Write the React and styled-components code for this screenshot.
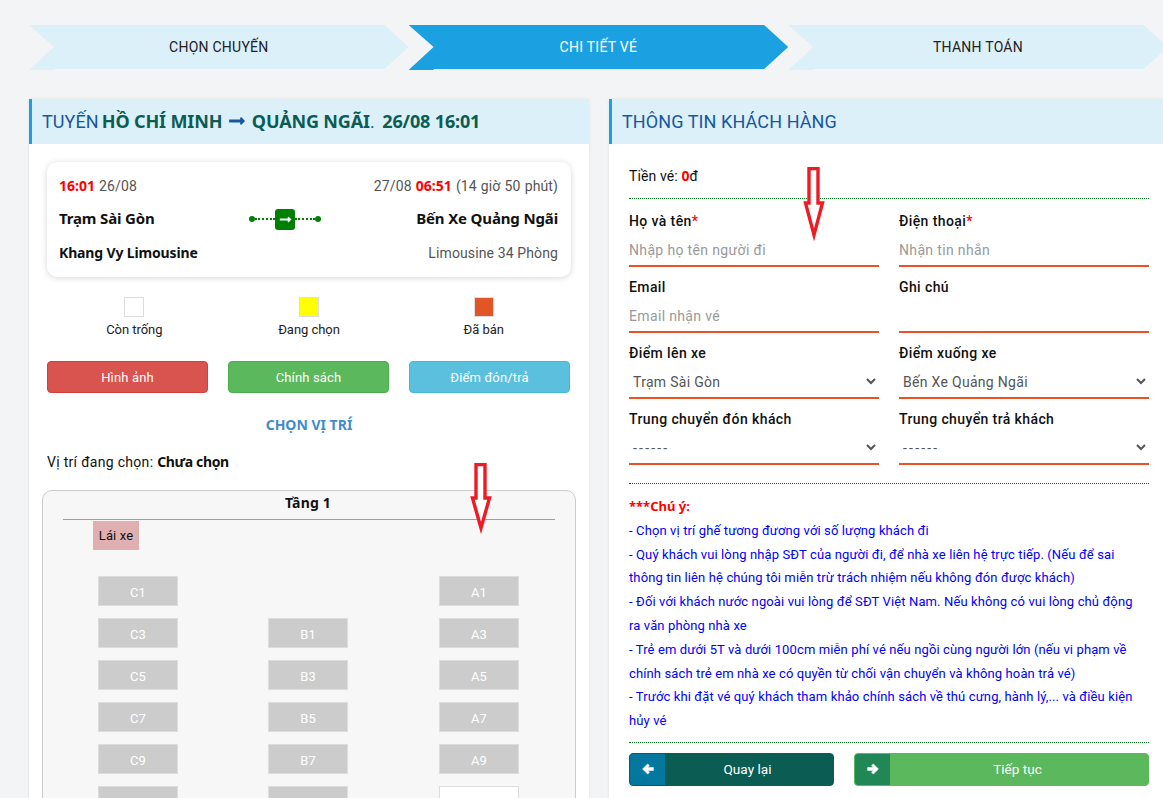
import React from 'react'
import styled, { createGlobalStyle } from 'styled-components'
import { FaLongArrowAltRight } from 'react-icons/fa'

const boldFont = '"Noto Sans", Roboto, sans-serif'

const GlobalStyle = createGlobalStyle`
  html, body {
    margin: 0;
    height: 100%;
    overflow: hidden;
    background: #f3f4f6;
  }
  * { box-sizing: border-box; }
  body {
    font-family: Roboto, "Noto Sans", sans-serif;
    font-size: 14px;
    letter-spacing: 0.12px;
    color: #111;
  }
  b {
    font-family: ${boldFont};
    font-weight: 700;
    letter-spacing: 0;
  }
`

const Page = styled.div`
  position: relative;
  width: 1163px;
  height: 798px;
  overflow: hidden;
  padding: 25px 0 0 29px;
`

const Steps = styled.div`
  display: flex;
  width: 1140px;
  height: 45px;
`

const Step = styled.div`
  flex: 0 0 379.6px;
  height: 45px;
  padding-bottom: 1px;
  display: flex;
  align-items: center;
  justify-content: center;
  font-size: 14px;
  letter-spacing: 0.25px;
  background: ${p => p.$active ? '#1ba1e2' : '#dcf0fa'};
  color: ${p => p.$active ? '#fff' : '#222'};
  clip-path: polygon(0 0, calc(100% - 24px) 0, 100% 22px, calc(100% - 24px) 44px, 25px 44px, 25px 45px, 0 45px, 25px 22px);
`

const Columns = styled.div`
  display: flex;
  align-items: flex-start;
  gap: 20px;
  margin-top: 29px;
  width: 1140px;
`

const Panel = styled.section`
  flex: 0 0 560px;
  height: 720px;
  background: #fff;
  box-shadow: 0 0 3px rgba(0,0,0, 0.08);
`

const PanelHeader = styled.h2`
  margin: 0;
  height: 45px;
  padding: 0 0 1px 10px;
  display: flex;
  align-items: center;
  gap: 4px;
  background: #dcf0fa;
  border-left: 3px solid #1ba1e2;
  color: #17589c;
  font-size: 18px;
  font-weight: 400;
  letter-spacing: 0.1px;
  white-space: pre;
`

const Strong = styled.b`
  color: #0b5c53;
  letter-spacing: -0.15px;
  word-spacing: 0;
`

const FirstStop = styled(Strong)`
  margin-left: -1.5px;
`

const TitleTail = styled.span`
  margin-left: 2px;
  word-spacing: 3px;
`

const RouteArrow = styled(FaLongArrowAltRight)`
  color: #17589c;
  font-size: 18px;
  margin-left: 1.5px;
`

const TicketCard = styled.div`
  margin: 18px 18px 0;
  height: 115px;
  padding: 14px 13px 0 12px;
  border-radius: 10px;
  background: #fff;
  box-shadow: 0 1px 6px rgba(0,0,0, 0.16);
`

const TicketRow = styled.div`
  display: flex;
  justify-content: space-between;
  align-items: center;
  height: 18px;
  margin-bottom: ${p => p.$gap || 0}px;
  font-size: 14px;
  word-spacing: ${p => p.$loose ? 0.5 : 0}px;
`

const Time = styled.b`
  color: #f00;
`

const Place = styled.b`
  font-size: 15px;
  letter-spacing: -0.15px;
  margin-top: -2px;
`

const Operator = styled.b`
  letter-spacing: -0.15px;
  margin-top: -2px;
`

const Muted = styled.span`
  color: #555;
`

const Route = styled.div`
  display: flex;
  align-items: center;
  width: 72px;
`

const RouteDot = styled.i`
  width: 6px;
  height: 6px;
  border-radius: 50%;
  background: #008000;
`

const RouteLine = styled.i`
  flex: 1;
  border-top: 2px dotted #008000;
`

const RouteBadge = styled.div`
  width: 20px;
  height: 21px;
  border-radius: 3px;
  background: #008000;
  color: #fff;
  display: flex;
  align-items: center;
  justify-content: center;
  font-size: 13px;
`

const Legend = styled.div`
  display: grid;
  grid-template-columns: repeat(3, 1fr);
  margin: 20px 18px 0;
`

const LegendItem = styled.div`
  display: flex;
  flex-direction: column;
  align-items: center;
  gap: 5px;
  font-size: 13px;
  letter-spacing: -0.05px;
  color: #222;
`

const Swatch = styled.span`
  width: 20px;
  height: 20px;
  border: 1px solid #ddd;
  background: ${p => p.$color};
`

const Actions = styled.div`
  display: grid;
  grid-template-columns: repeat(3, 161px);
  column-gap: 20px;
  margin: 24px 18px 0;
`

const ActionButton = styled.button`
  height: 32px;
  padding-top: 1px;
  border: 1px solid ${p => p.$border};
  border-radius: 4px;
  background: ${p => p.$bg};
  color: #fff;
  font: inherit;
  font-size: 13px;
  letter-spacing: 0.15px;
`

const PickTitle = styled.b`
  display: block;
  margin-top: 23px;
  text-align: center;
  color: #428bca;
  line-height: 18px;
`

const PickState = styled.div`
  margin: 19px 0 0 18px;
  line-height: 18px;
  letter-spacing: 0.3px;
`

const PickValue = styled.b`
  letter-spacing: -0.35px;
`

const SeatBox = styled.div`
  margin: 19px 13px 0 13px;
  height: 400px;
  padding-top: 3px;
  border: 1px solid #ccc;
  border-radius: 10px;
  background: #f7f7f7;
`

const Floor = styled.b`
  display: block;
  margin: 0 20px;
  padding-right: 2px;
  height: 26px;
  border-bottom: 1px solid #a89b9b;
  text-align: center;
  line-height: 18px;
  letter-spacing: 0.2px;
`

const Driver = styled.div`
  width: 46px;
  height: 29px;
  margin: 1px 0 0 50px;
  background: #e0b0b0;
  font-size: 13px;
  line-height: 30px;
  text-align: center;
`

const SeatGrid = styled.div`
  display: grid;
  grid-template-columns: 170px 171px 80px;
  row-gap: 12px;
  margin: 26px 0 0 55px;
`

const Seat = styled.div`
  width: 80px;
  height: 30px;
  border: 1px solid #ddd;
  background: ${p => p.$free ? '#fff' : '#ccc'};
  color: #fff;
  font-size: 13px;
  line-height: 31px;
  text-align: center;
`

const Form = styled.div`
  padding: 0 20px;
`

const Fare = styled.div`
  height: 55px;
  padding-top: 23px;
  line-height: 18px;
  border-bottom: 1px dotted #0a7a1e;
`

const Money = styled.b`
  color: #f00;
`

const FieldGrid = styled.div`
  display: grid;
  grid-template-columns: 250px 250px;
  column-gap: 20px;
  padding-top: 13px;
`

const Field = styled.label`
  display: block;
  height: 66px;
`

const FieldLabel = styled.span`
  display: block;
  font-weight: 500;
  line-height: 18px;
  height: 20px;
  letter-spacing: 0.4px;
`

const Req = styled.span`
  color: #f00;
`

const TextInput = styled.input`
  display: block;
  width: 100%;
  height: 35px;
  padding: 3px 0 0;
  border: 0;
  border-bottom: 2px solid #eb5223;
  outline: none;
  background: transparent;
  font: inherit;
  letter-spacing: 0.35px;
  &::placeholder { color: #999; }
`

const SelectInput = styled.select`
  display: block;
  width: 100%;
  height: 35px;
  padding-top: 2px;
  border: 0;
  border-bottom: 2px solid #eb5223;
  outline: none;
  background: transparent;
  color: #555;
  font: inherit;
  letter-spacing: ${p => p.$dash ? '2.2px' : '0.3px'};
`

const Note = styled.div`
  margin-top: 7px;
  padding: 11px 5px 0 0;
  border-top: 1px dotted #0b5c53;
  font-size: 13px;
  line-height: 23.8px;
  color: #00f;
`

const NoteTitle = styled.b`
  color: #f00;
`

const FooterRow = styled.div`
  display: grid;
  grid-template-columns: 205px 295px;
  column-gap: 20px;
  margin-top: 9px;
  padding-top: 10px;
  border-top: 1px dotted #0a7a1e;
`

const NavButton = styled.button`
  display: flex;
  align-items: stretch;
  height: 33px;
  padding: 0;
  overflow: hidden;
  border: 1px solid ${p => p.$bg};
  border-radius: 4px;
  background: ${p => p.$bg};
  color: #fff;
  font: inherit;
  font-size: 13.6px;
`

const NavIcon = styled.span`
  flex: 0 0 35px;
  display: flex;
  align-items: center;
  justify-content: center;
  background: ${p => p.$bg};
`

const NavLabel = styled.span`
  flex: 1;
  align-self: center;
  padding-right: 3px;
`

const ArrowGlyph = styled.svg`
  transform: ${p => p.$flip ? 'scaleX(-1)' : 'none'};
`

const Annotation = styled.svg`
  position: absolute;
  left: ${p => p.$x}px;
  top: ${p => p.$y}px;
`

// the thick left arrow of the nav buttons, mirrored for "next"
const NavArrow = ({ flip }) => (
  <ArrowGlyph $flip={flip} width="12" height="12" viewBox="0 0 12 12">
    <path
      d="M0.6 6 L5.7 0.9 L7.5 2.7 L5.6 4.6 H11.4 V7.4 H5.6 L7.5 9.3 L5.7 11.1 Z"
      fill="#fff"
      stroke="#fff"
      strokeWidth="0.6"
      strokeLinejoin="round"
    />
  </ArrowGlyph>
)

const RedArrow = ({ x, y, h, head }) => (
  <Annotation $x={x} $y={y} width="22" height={h} viewBox={`0 0 22 ${h}`}>
    <path
      d={`M6 1.5 H15 V${head} H19.5 L11 ${h - 8} L2.5 ${head} H6 Z`}
      fill="#fff"
      stroke="#ed1c24"
      strokeWidth="3.4"
      strokeMiterlimit="10"
    />
  </Annotation>
)

const seatRows = [
  ['C1', null, 'A1'],
  ['C3', 'B1', 'A3'],
  ['C5', 'B3', 'A5'],
  ['C7', 'B5', 'A7'],
  ['C9', 'B7', 'A9'],
  ['', '', ''],
]

const notes = [
  '- Chọn vị trí ghế tương đương với số lượng khách đi',
  '- Quý khách vui lòng nhập SĐT của người đi, để nhà xe liên hệ trực tiếp. (Nếu để sai thông tin liên hệ chúng tôi miễn trừ trách nhiệm nếu không đón được khách)',
  '- Đối với khách nước ngoài vui lòng để SĐT Việt Nam. Nếu không có vui lòng chủ động ra văn phòng nhà xe',
  '- Trẻ em dưới 5T và dưới 100cm miễn phí vé nếu ngồi cùng người lớn (nếu vi phạm về chính sách trẻ em nhà xe có quyền từ chối vận chuyển và không hoàn trả vé)',
  '- Trước khi đặt vé quý khách tham khảo chính sách về thú cưng, hành lý,... và điều kiện hủy vé',
]

export default function App () {
  return (
    <Page>
      <GlobalStyle />
      <Steps>
        <Step>CHỌN CHUYẾN</Step>
        <Step $active>CHI TIẾT VÉ</Step>
        <Step>THANH TOÁN</Step>
      </Steps>

      <Columns>
        <Panel>
          <PanelHeader>
            <span>TUYẾN <FirstStop>HỒ CHÍ MINH</FirstStop></span>
            <RouteArrow />
            <TitleTail><Strong>QUẢNG NGÃI</Strong>. <Strong>26/08 16:01</Strong></TitleTail>
          </PanelHeader>

          <TicketCard>
            <TicketRow $gap={16} $loose>
              <span><Time>16:01</Time> <Muted>26/08</Muted></span>
              <span><Muted>27/08</Muted> <Time>06:51</Time> <Muted>(14 giờ 50 phút)</Muted></span>
            </TicketRow>
            <TicketRow $gap={16}>
              <Place>Trạm Sài Gòn</Place>
              <Route>
                <RouteDot />
                <RouteLine />
                <RouteBadge><FaLongArrowAltRight /></RouteBadge>
                <RouteLine />
                <RouteDot />
              </Route>
              <Place>Bến Xe Quảng Ngãi</Place>
            </TicketRow>
            <TicketRow>
              <Operator>Khang Vy Limousine</Operator>
              <Muted>Limousine 34 Phòng</Muted>
            </TicketRow>
          </TicketCard>

          <Legend>
            <LegendItem><Swatch $color="#fff" />Còn trống</LegendItem>
            <LegendItem><Swatch $color="#ff0" />Đang chọn</LegendItem>
            <LegendItem><Swatch $color="#e25526" />Đã bán</LegendItem>
          </Legend>

          <Actions>
            <ActionButton $bg="#d9534f" $border="#d43f3a">Hình ảnh</ActionButton>
            <ActionButton $bg="#5cb85c" $border="#4cae4c">Chính sách</ActionButton>
            <ActionButton $bg="#5bc0de" $border="#46b8da">Điểm đón/trả</ActionButton>
          </Actions>

          <PickTitle>CHỌN VỊ TRÍ</PickTitle>
          <PickState>Vị trí đang chọn: <PickValue>Chưa chọn</PickValue></PickState>

          <SeatBox>
            <Floor>Tầng 1</Floor>
            <Driver>Lái xe</Driver>
            <SeatGrid>
              {seatRows.flat().map((s, i) => s === null
                ? <span key={i} />
                : <Seat key={i} $free={i === 17}>{s}</Seat>
              )}
            </SeatGrid>
          </SeatBox>
        </Panel>

        <Panel>
          <PanelHeader>THÔNG TIN KHÁCH HÀNG</PanelHeader>
          <Form>
            <Fare>Tiền vé: <Money>0</Money>đ</Fare>
            <FieldGrid>
              <Field>
                <FieldLabel>Họ và tên<Req>*</Req></FieldLabel>
                <TextInput placeholder="Nhập họ tên người đi" />
              </Field>
              <Field>
                <FieldLabel>Điện thoại<Req>*</Req></FieldLabel>
                <TextInput placeholder="Nhận tin nhắn" />
              </Field>
              <Field>
                <FieldLabel>Email</FieldLabel>
                <TextInput placeholder="Email nhận vé" />
              </Field>
              <Field>
                <FieldLabel>Ghi chú</FieldLabel>
                <TextInput />
              </Field>
              <Field>
                <FieldLabel>Điểm lên xe</FieldLabel>
                <SelectInput defaultValue="a"><option value="a">Trạm Sài Gòn</option></SelectInput>
              </Field>
              <Field>
                <FieldLabel>Điểm xuống xe</FieldLabel>
                <SelectInput defaultValue="a"><option value="a">Bến Xe Quảng Ngãi</option></SelectInput>
              </Field>
              <Field>
                <FieldLabel>Trung chuyển đón khách</FieldLabel>
                <SelectInput $dash defaultValue="a"><option value="a">------</option></SelectInput>
              </Field>
              <Field>
                <FieldLabel>Trung chuyển trả khách</FieldLabel>
                <SelectInput $dash defaultValue="a"><option value="a">------</option></SelectInput>
              </Field>
            </FieldGrid>
            <Note>
              <NoteTitle>***Chú ý:</NoteTitle>
              {notes.map(n => <div key={n}>{n}</div>)}
            </Note>
            <FooterRow>
              <NavButton $bg="#0b5c53">
                <NavIcon $bg="#04779f"><NavArrow /></NavIcon>
                <NavLabel>Quay lại</NavLabel>
              </NavButton>
              <NavButton $bg="#5cb85c">
                <NavIcon $bg="#218757"><NavArrow flip /></NavIcon>
                <NavLabel>Tiếp tục</NavLabel>
              </NavButton>
            </FooterRow>
          </Form>
        </Panel>
      </Columns>

      <RedArrow x={803} y={167} h={76} head={36} />
      <RedArrow x={470} y={463} h={73} head={35} />
    </Page>
  )
}
